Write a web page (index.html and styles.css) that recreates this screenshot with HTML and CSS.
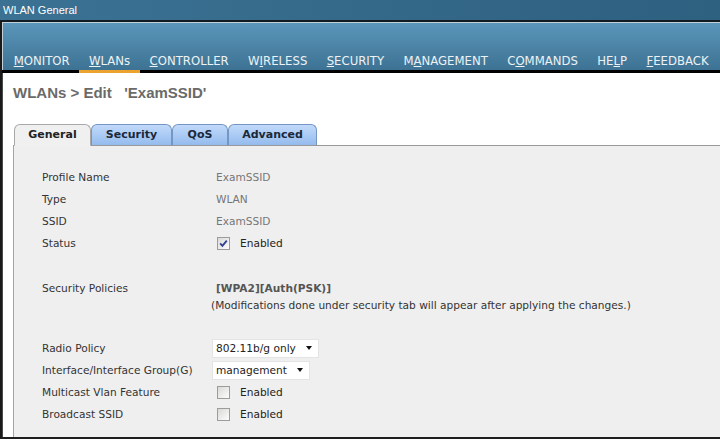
FILE: index.html
```html
<!DOCTYPE html>
<html lang="en">
<head>
    <meta charset="UTF-8">
    <title>WLAN General</title>
    <link rel="stylesheet" href="styles.css">
</head>
<body>

    <!-- Window title -->
    <div class="titlebar">WLAN General</div>

    <div class="frame">
        <!-- Top menu -->
        <nav class="menu">
            <a class="menu-item"><u>M</u>ONITOR</a>
            <a class="menu-item active"><u>W</u>LANs</a>
            <a class="menu-item"><u>C</u>ONTROLLER</a>
            <a class="menu-item">W<u>I</u>RELESS</a>
            <a class="menu-item"><u>S</u>ECURITY</a>
            <a class="menu-item">M<u>A</u>NAGEMENT</a>
            <a class="menu-item">C<u>O</u>MMANDS</a>
            <a class="menu-item">HE<u>L</u>P</a>
            <a class="menu-item"><u>F</u>EEDBACK</a>
        </nav>

        <div class="content">
            <h1 class="page-title">WLANs &gt; Edit&nbsp;&nbsp; 'ExamSSID'</h1>

            <!-- Tabs -->
            <div class="tabs">
                <div class="tab selected tab-general">General</div>
                <div class="tab tab-security">Security</div>
                <div class="tab tab-qos">QoS</div>
                <div class="tab tab-advanced">Advanced</div>
            </div>

            <div class="panel">
                <div class="row">
                    <span class="label">Profile Name</span>
                    <span class="value muted">ExamSSID</span>
                </div>
                <div class="row">
                    <span class="label">Type</span>
                    <span class="value muted">WLAN</span>
                </div>
                <div class="row">
                    <span class="label">SSID</span>
                    <span class="value muted">ExamSSID</span>
                </div>
                <div class="row">
                    <span class="label">Status</span>
                    <span class="value check-field">
                        <span class="check">
                            <svg width="11" height="11" viewBox="0 0 11 11"><path d="M2.2 5.4 L4.4 7.8 L8.8 2.6" fill="none" stroke="#2e3f94" stroke-width="1.8"/></svg>
                        </span>
                        Enabled
                    </span>
                </div>

                <div class="row policy">
                    <span class="label">Security Policies</span>
                    <div class="value">
                        <div class="policy-value">[WPA2][Auth(PSK)]</div>
                        <div class="policy-note">(Modifications done under security tab will appear after applying the changes.)</div>
                    </div>
                </div>

                <div class="row radio">
                    <span class="label">Radio Policy</span>
                    <span class="value">
                        <span class="select">802.11b/g only <span class="arrow"></span></span>
                    </span>
                </div>
                <div class="row">
                    <span class="label">Interface/Interface Group(G)</span>
                    <span class="value">
                        <span class="select">management <span class="arrow"></span></span>
                    </span>
                </div>
                <div class="row">
                    <span class="label">Multicast Vlan Feature</span>
                    <span class="value check-field">
                        <span class="check"></span>
                        Enabled
                    </span>
                </div>
                <div class="row">
                    <span class="label">Broadcast SSID</span>
                    <span class="value check-field">
                        <span class="check"></span>
                        Enabled
                    </span>
                </div>
            </div>
        </div>
    </div>

</body>
</html>
```

FILE: styles.css
```css
/* Basic reset */
* {
    box-sizing: border-box;
}

body {
    margin: 0;
    width: 720px;
    height: 440px;
    overflow: hidden;
    background-color: #fff;
    font-family: "DejaVu Sans", Verdana, sans-serif;
    display: flex;
    flex-direction: column;
}

.titlebar {
    height: 20px;
    line-height: 20px;
    padding-left: 3px;
    color: #fff;
    font-family: "Liberation Sans", Arial, sans-serif;
    font-size: 11px;
    background: linear-gradient(to right, #3b7293, #2e6080);
}

.frame {
    flex: 1;
    display: flex;
    flex-direction: column;
    border-top: 2px solid #131b22;
    border-left: 2px solid #1a1a1a;
    border-bottom: 2px solid #1e1e1e;
    margin-bottom: 1px;
}

/* Top menu */
.menu {
    height: 51px;
    display: flex;
    align-items: flex-end;
    padding-left: 2px;
    border-bottom: 3px solid #000;
    background: linear-gradient(#5b97bb, #3d7293);
    box-shadow: inset 1px 1px 0 #c3d0d8;
}

.menu-item {
    display: block;
    padding: 0 9.7px 2px;
    margin-bottom: -3px;
    border-bottom: 3px solid transparent;
    font-size: 11.7px;
    line-height: 14px;
    color: #edf2f5;
}

.menu-item.active {
    border-bottom-color: #eca22f;
}

.content {
    flex: 1;
    display: flex;
    flex-direction: column;
    border-left: 1px solid #4a4a4a;
    padding: 11px 0 0 10px;
}

.page-title {
    margin: 0 0 22px;
    font-family: "Liberation Sans", Arial, sans-serif;
    font-size: 15px;
    line-height: 18px;
    font-weight: bold;
    color: #6a6a6a;
}

/* Tabs */
.tabs {
    display: flex;
    margin-left: 1px;
    margin-bottom: -1px;
    position: relative;
}

.tab {
    height: 22px;
    line-height: 20px;
    text-align: center;
    font-size: 11px;
    font-weight: bold;
    color: #1b2838;
    border: 1px solid #7596c4;
    border-bottom-color: #999;
    border-radius: 6px 6px 0 0;
    background: linear-gradient(#c2dafa, #94bbee);
}

.tab.selected {
    color: #222;
    border-color: #a8a8a8;
    border-bottom-color: #f0f0f0;
    background: #f0f0f0;
}

.tab-general { width: 77px; }
.tab-security { width: 81px; }
.tab-qos { width: 56px; }
.tab-advanced { width: 89px; }

.panel {
    flex: 1;
    background-color: #efefef;
    border-top: 1px solid #999;
    border-left: 1px solid #a5a5a5;
    padding: 20px 0 0 28px;
    font-size: 10.6px;
    color: #333;
}

.row {
    display: flex;
    align-items: center;
    height: 22px;
}

.label {
    width: 174px;
    flex: none;
}

.muted {
    color: #767676;
}

.row.policy {
    height: auto;
    align-items: flex-start;
    margin-top: 26px;
    line-height: 17px;
}

.policy-value {
    font-weight: bold;
    color: #555;
}

.policy-note {
    margin-left: -5px;
    color: #333;
}

.row.radio {
    margin-top: 23px;
}

.select {
    display: inline-flex;
    align-items: center;
    gap: 10px;
    height: 19px;
    margin-left: -4px;
    padding: 0 6px 0 3px;
    background-color: #fff;
    border: 1px solid #e4e4e4;
    color: #222;
}

.arrow {
    width: 0;
    height: 0;
    border-left: 3.5px solid transparent;
    border-right: 3.5px solid transparent;
    border-top: 4px solid #111;
}

.check-field {
    display: flex;
    align-items: center;
    gap: 10px;
    color: #222;
}

.check {
    width: 13px;
    height: 13px;
    margin-left: 1px;
    border: 1px solid #9c9c9c;
    background: linear-gradient(135deg, #d9d9d6, #fdfdfd);
    display: flex;
    align-items: center;
    justify-content: center;
}
```
